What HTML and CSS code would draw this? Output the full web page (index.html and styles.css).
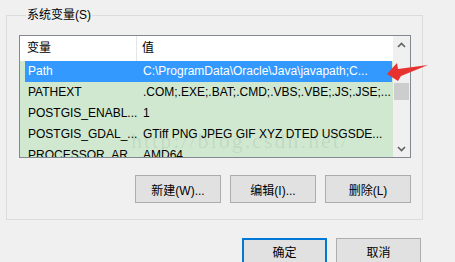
FILE: index.html
```html
<!DOCTYPE html>
<html lang="zh-CN">
<head>
    <meta charset="UTF-8">
    <title>环境变量</title>
    <link rel="stylesheet" href="styles.css">
</head>
<body>

    <div class="dialog">
        <fieldset class="group">
            <legend>系统变量(S)</legend>

            <div class="listbox">
                <div class="list">
                    <div class="list-head">
                        <div class="col-name">变量</div>
                        <div class="col-value">值</div>
                    </div>
                    <div class="row selected">
                        <div class="cell-name">Path</div>
                        <div class="cell-value">C:\ProgramData\Oracle\Java\javapath;C...</div>
                    </div>
                    <div class="row">
                        <div class="cell-name">PATHEXT</div>
                        <div class="cell-value">.COM;.EXE;.BAT;.CMD;.VBS;.VBE;.JS;.JSE;...</div>
                    </div>
                    <div class="row">
                        <div class="cell-name">POSTGIS_ENABL...</div>
                        <div class="cell-value">1</div>
                    </div>
                    <div class="row">
                        <div class="cell-name">POSTGIS_GDAL_...</div>
                        <div class="cell-value">GTiff PNG JPEG GIF XYZ DTED USGSDE...</div>
                    </div>
                    <div class="row">
                        <div class="cell-name">PROCESSOR_AR...</div>
                        <div class="cell-value">AMD64</div>
                    </div>
                    <div class="watermark">http://blog.csdn.net/</div>
                </div>
                <div class="scrollbar">
                    <div class="sb-btn">
                        <svg width="9" height="6" viewBox="0 0 9 6"><path d="M1 5 L4.5 1.5 L8 5" fill="none" stroke="#606060" stroke-width="1.6"/></svg>
                    </div>
                    <div class="sb-track">
                        <div class="sb-thumb"></div>
                    </div>
                    <div class="sb-btn">
                        <svg width="9" height="6" viewBox="0 0 9 6"><path d="M1 1 L4.5 4.5 L8 1" fill="none" stroke="#606060" stroke-width="1.6"/></svg>
                    </div>
                </div>
            </div>

            <div class="actions">
                <button class="btn">新建(W)...</button>
                <button class="btn">编辑(I)...</button>
                <button class="btn">删除(L)</button>
            </div>
        </fieldset>

        <div class="footer">
            <button class="btn default">确定</button>
            <button class="btn">取消</button>
        </div>

        <!-- annotation arrow drawn over the screenshot -->
        <svg class="pointer" width="50" height="26" viewBox="380 58 50 26">
            <polygon points="387,74 397,63 398,69 428,65 401,76 398,81" fill="#e8322f"/>
        </svg>
    </div>

</body>
</html>
```

FILE: styles.css
```css
body {
    margin: 0;
    background: #f0f0f0;
    font-family: "Liberation Sans", "Noto Sans CJK SC", sans-serif;
    font-size: 12px;
    color: #000;
    width: 455px;
    height: 262px;
    overflow: hidden;
}
.dialog {
    position: relative;
    padding-top: 7px;
}
.group {
    margin: 0 0 0 6px;
    width: 417px;
    box-sizing: border-box;
    border: 1px solid #dcdcdc;
    padding: 12px 11px 16px 12px;
    min-width: 0;
}
.group legend {
    margin-left: 7px;
    padding: 0 1px;
    line-height: 16px;
}
.listbox {
    display: flex;
    height: 123px;
    box-sizing: border-box;
    border: 1px solid #828790;
    background: #cfe8cf;
}
.list {
    position: relative;
    flex: 1;
    overflow: hidden;
}
.list-head {
    display: grid;
    grid-template-columns: 117px 1fr;
    height: 25px;
    background: #fff;
    line-height: 25px;
}
.col-name {
    padding-left: 7px;
    border-right: 1px solid #e5e5e5;
}
.col-value {
    padding-left: 5px;
}
.row {
    display: grid;
    grid-template-columns: 112px 1fr;
    height: 21px;
    line-height: 21px;
    margin: 0 1px 0 5px;
}
.row.selected {
    background: #3399ff;
    color: #fff;
}
.cell-name, .cell-value {
    white-space: nowrap;
    overflow: hidden;
}
.cell-name {
    padding-left: 3px;
}
.cell-value {
    padding-left: 6px;
    padding-right: 2px;
}
.watermark {
    position: absolute;
    left: 111px;
    top: 92px;
    font-family: "Liberation Serif", serif;
    font-size: 22px;
    letter-spacing: 2px;
    color: rgba(0, 0, 0, 0.08);
    white-space: nowrap;
}
.scrollbar {
    width: 17px;
    display: flex;
    flex-direction: column;
    background: #f0f0f0;
}
.sb-btn {
    height: 17px;
    display: flex;
    align-items: center;
    justify-content: center;
}
.sb-track {
    flex: 1;
    padding: 30px 1px 0;
}
.sb-thumb {
    height: 17px;
    background: #cdcdcd;
}
.actions {
    display: flex;
    justify-content: flex-end;
    gap: 9px;
    margin-top: 17px;
}
.btn {
    width: 86px;
    height: 28px;
    box-sizing: border-box;
    background: #e1e1e1;
    border: 1px solid #adadad;
    font-family: "Liberation Sans", "Noto Sans CJK SC", sans-serif;
    font-size: 12px;
    color: #000;
    padding: 0;
}
.footer {
    display: flex;
    gap: 9px;
    margin: 18px 0 0 242px;
}
.footer .btn {
    width: 85px;
    height: 26px;
}
.btn.default {
    border: 2px solid #0078d7;
}
.pointer {
    position: absolute;
    left: 380px;
    top: 58px;
}
```
